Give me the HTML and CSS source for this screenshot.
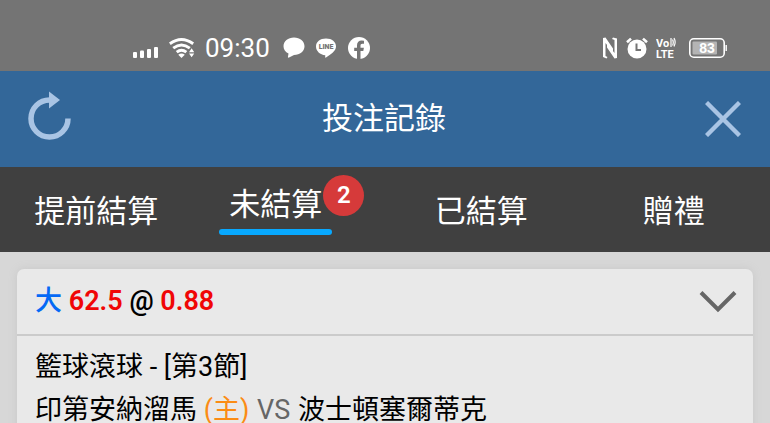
FILE: index.html
```html
<!DOCTYPE html>
<html lang="zh-Hant">
<head>
<meta charset="utf-8">
<meta name="viewport" content="width=device-width, initial-scale=1">
<title>投注記錄</title>
<link rel="stylesheet" href="styles.css">
</head>
<body>
<div class="status">
  <div class="status-group">
    <svg class="icon" width="26" height="22" viewBox="0 0 26 22" fill="#fff" aria-hidden="true">
      <rect x="0" y="15" width="4" height="6" rx="1"/><rect x="7" y="13.5" width="4" height="7.5" rx="1"/><rect x="14" y="12" width="4" height="9" rx="1"/><rect x="21" y="10" width="4" height="11" rx="1"/>
    </svg>
    <svg class="icon" width="26" height="22" viewBox="0 0 27 22" aria-hidden="true">
      <g fill="none" stroke="#fff" stroke-width="3"><path d="M.9 6.6Q13 -2.2 25.1 6.6"/><path d="M4.400 11.2Q13 4.400 21.6 11.2"/><path d="M8 15.4Q13 11.4 18 15.4"/></g>
      <path d="M9.6 18Q13 15.6 16.4 18L13 21.4Z" fill="#fff"/>
      <path d="M23.5 11.3l2.7 4h-5.4zM23.5 20.7l2.7-4h-5.4z" fill="#fff"/>
    </svg>
    <span class="clock">09:30</span>
    <svg class="icon" width="22" height="22" viewBox="0 0 22 22" fill="#fff" aria-hidden="true">
      <path d="M11 .5C17 .5 21.5 4.300 21.500 9.200S17 18 11 18L6 20.600Q4.500 21.200 5 19.600L5.500 16.500C2.300 15 .5 12.400 .5 9.200C.5 4.300 5 .5 11 .5Z"/>
    </svg>
    <svg class="icon" width="22" height="22" viewBox="0 0 22 22" fill="#fff" aria-hidden="true">
      <path d="M11 1.500C17 1.500 21 5 21 9.500C21 14 16 17 11 20.500C10.300 21 10 20.500 10.300 18.200C5 17.800 1 14 1 9.500C1 5 5 1.500 11 1.500Z"/>
      <text class="line-text" x="11" y="12" text-anchor="middle">LINE</text>
    </svg>
    <svg class="icon" width="24" height="24" viewBox="0 0 24 24" aria-hidden="true">
      <circle cx="12" cy="12" r="11" fill="#fff"/>
      <path d="M10 23.500V15H7.200V11.800H10V9.300C10 6.200 11.900 4.600 14.600 4.600L17 4.800V7.700H15.500C13.900 7.700 13.500 8.600 13.500 9.600V11.800H16.900L16.300 15H13.500V23.500Z" fill="#747474"/>
    </svg>
  </div>
  <div class="status-group status-right">
    <svg class="icon" width="16" height="24" viewBox="0 0 16 24" fill="#fff" aria-hidden="true">
      <path d="M1 2L3.500 1.500L11 12.500V16.500L3.500 7V20L5.500 21L4.500 22.500L1 21Z"/>
      <path d="M15 22L12.500 22.500L5 11.500V7.500L12.500 17V4L10 3L11 1.500L15 2.500Z"/>
    </svg>
    <svg class="icon" width="22" height="22" viewBox="0 0 22 22" fill="none" aria-hidden="true">
      <circle cx="11" cy="12" r="9.500" fill="#fff"/>
      <path d="M1 5.200L5 1.600M17 1.600L21 5.200" stroke="#fff" stroke-width="2.600"/>
      <path d="M10.500 6.500V13H15" stroke="#747474" stroke-width="2"/>
    </svg>
    <svg class="icon" width="20" height="24" viewBox="0 0 20 24" fill="#fff" aria-hidden="true">
      <text class="volte" x="0" y="11">Vo</text><text class="volte" x="0" y="22">LTE</text>
      <path d="M15 2V11M16.600 3.500Q17.900 6.500 16.600 9.500M18 2Q20.300 6 18 10.500" fill="none" stroke="#fff" stroke-width="1.200"/>
    </svg>
    <svg class="icon battery" width="38" height="22" viewBox="0 0 38 22" aria-hidden="true">
      <rect x=".8" y="1.800" width="34.400" height="18.400" rx="4" fill="none" stroke="#fff" stroke-width="1.600"/>
      <rect x="3.500" y="4.500" width="24.500" height="13" rx="1" fill="#b4b4b4"/>
      <path d="M37.200 8V14" stroke="#fff" stroke-width="1.400"/>
      <text class="battery-text" x="18" y="16" text-anchor="middle">83</text>
    </svg>
  </div>
</div>
<header class="header">
  <button class="icon-button" type="button" aria-label="重新整理">
    <svg class="icon" width="46" height="56" viewBox="0 0 46 56" aria-hidden="true">
      <path d="M41 27.500A18.500 18.500 0 1 1 22.500 9" fill="none" stroke="#a9c4e4" stroke-width="5.500"/>
      <path d="M22 .5V17.500L33 9Z" fill="#a9c4e4"/>
    </svg>
  </button>
  <h1 class="title">投注記錄</h1>
  <button class="icon-button close" type="button" aria-label="關閉">
    <svg class="icon" width="36" height="36" viewBox="0 0 36 36" aria-hidden="true"><path d="M1.500 1.500L34.500 34.500M34.500 1.500L1.500 34.500" stroke="#a9c4e4" stroke-width="4.400"/></svg>
  </button>
</header>
<nav class="tabs">
  <a class="tab" href="#early">提前結算</a>
  <a class="tab tab-active" href="#open" aria-current="page"><span class="tab-label">未結算<span class="badge">2</span></span></a>
  <a class="tab" href="#settled">已結算</a>
  <a class="tab" href="#gift">贈禮</a>
</nav>
<main class="content">
  <article class="card">
    <div class="card-head">
      <h2 class="bet"><span class="pick">大</span> <span class="odds">62.5</span> @ <span class="odds">0.88</span></h2>
      <button class="icon-button" type="button" aria-label="展開">
        <svg class="icon" width="38" height="24" viewBox="0 0 38 24" aria-hidden="true"><path d="M2 3.500L19 20.500L36 3.500" fill="none" stroke="#666" stroke-width="4"/></svg>
      </button>
    </div>
    <div class="card-body">
      <p class="row">籃球滾球 - [第3節]</p>
      <p class="row">印第安納溜馬 <span class="home">(主)</span> <span class="versus">VS</span> 波士頓塞爾蒂克</p>
    </div>
  </article>
</main>
</body>
</html>
```
FILE: styles.css
```css
* { box-sizing: border-box; }

body {
  margin: 0;
  min-height: 100vh;
  display: flex;
  flex-direction: column;
  background: #d7d7d7;
  color: #000;
  font-family: Roboto, "Noto Sans CJK TC", sans-serif;
}

.icon { display: block; flex: none; }

.status {
  display: flex;
  justify-content: space-between;
  align-items: center;
  flex: none;
  height: 71px;
  padding: 24px 43px 0 133px;
  background: #747474;
  color: #fff;
}

.status-group { display: flex; align-items: center; gap: 10px; }
.status-right { gap: 8px; }
.battery { margin-left: 5px; }
.clock { font-size: 26px; line-height: 30px; padding-right: 3px; }
.line-text { font: 900 7px Roboto, sans-serif; fill: #747474; }
.volte { font: 700 11px Roboto, sans-serif; }
.battery-text { font: 700 14px "Liberation Sans", sans-serif; fill: #fff; }

.header {
  display: grid;
  grid-template-columns: 1fr auto 1fr;
  align-items: center;
  flex: none;
  height: 96px;
  padding: 0 29px 0 27px;
  background: #336799;
}

.icon-button {
  justify-self: start;
  padding: 0;
  border: 0;
  background: none;
}

.close { justify-self: end; }

.title {
  margin: 0;
  color: #fff;
  font-size: 31px;
  font-weight: 400;
  line-height: 40px;
}

.tabs {
  display: grid;
  grid-template-columns: repeat(4, 1fr);
  flex: none;
  height: 85px;
  background: #404040;
}

.tab {
  display: flex;
  align-items: center;
  justify-content: center;
  padding-top: 4px;
  color: #fff;
  font-size: 31px;
  line-height: 40px;
  text-decoration: none;
}

.tab-active { padding: 0 26px 10px 0; }

.tab-label {
  position: relative;
  padding: 0 10px 5px;
  margin-top: 6px;
}

.tab-label::after {
  content: "";
  position: absolute;
  left: 0;
  right: 0;
  bottom: -5px;
  height: 6px;
  border-radius: 3px;
  background: #08a9ff;
}

.badge {
  position: absolute;
  top: -10px;
  right: -32px;
  width: 41px;
  height: 41px;
  border-radius: 50%;
  background: #d63a3a;
  font-size: 24px;
  font-weight: 600;
  line-height: 41px;
  text-align: center;
}

.content {
  display: flex;
  flex: 1;
  padding: 17px 17px 0;
}

.card {
  flex: 1;
  border-radius: 7px 7px 0 0;
  background: #e9e9e9;
  box-shadow: 0 0 8px #c8c8c8;
}

.card-head {
  display: flex;
  align-items: center;
  justify-content: space-between;
  height: 67px;
  padding: 0 16px 2px 18px;
  border-bottom: 2px solid #cbcbcb;
}

.bet {
  margin: 0;
  font-size: 27px;
  font-weight: 600;
  line-height: 40px;
}

.pick { font-weight: 500; color: #0569f5; }
.odds { color: #f00606; }

.card-body { padding: 10px 18px 0; }

.row {
  margin: 0;
  font-size: 27px;
  line-height: 43px;
}

.home { color: #fb8c14; }
.versus { margin: 0 1px; color: #666; }
```
